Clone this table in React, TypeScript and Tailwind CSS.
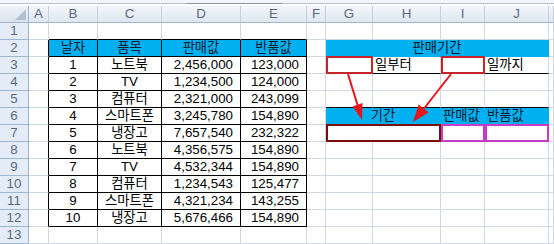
import React from 'react';
import clsx from 'clsx';

// --- grid line colours ---
const gr = 'border-r-[#d0d7e5]';
const gb = 'border-b-[#d0d7e5]';
const kr = 'border-r-black';
const kb = 'border-b-black';
const br = 'border-r-[#00b0f0]';
const bb = 'border-b-[#00b0f0]';

const data: [number, string, string, string][] = [
  [1, '노트북', '2,456,000', '123,000'],
  [2, 'TV', '1,234,500', '124,000'],
  [3, '컴퓨터', '2,321,000', '243,099'],
  [4, '스마트폰', '3,245,780', '154,890'],
  [5, '냉장고', '7,657,540', '232,322'],
  [6, '노트북', '4,356,575', '154,890'],
  [7, 'TV', '4,532,344', '154,890'],
  [8, '컴퓨터', '1,234,543', '125,477'],
  [9, '스마트폰', '4,321,234', '143,255'],
  [10, '냉장고', '5,676,466', '154,890'],
];

const Cell = ({
  children,
  r = gr,
  b = gb,
  className = '',
  box,
}: {
  children?: React.ReactNode;
  r?: string;
  b?: string;
  className?: string;
  box?: string;
}) => (
  <div className={clsx('relative flex items-center whitespace-nowrap border-r border-b', r, b, className)}>
    {children}
    {box && <div className={clsx('absolute left-0 top-[-1px] right-[-1px] bottom-[-1px] border-2 z-10', box)} />}
  </div>
);

const RowHead = ({ n }: { n: number }) => (
  <div className="flex items-center justify-center bg-[#e4ecf7] border-r border-b border-r-[#9eb6ce] border-b-[#9eb6ce] text-[#5a6a82]">
    {n}
  </div>
);

const blue = 'bg-[#00b0f0] text-[#1a1a2e]';

const App = () => {
  const letters = ['A', 'B', 'C', 'D', 'E', 'F', 'G', 'H', 'I', 'J', ''];

  const rightSide = (row: number) => {
    if (row === 2)
      return (
        <Cell r={br} b={bb} className={clsx('col-span-4 justify-center', blue)}>
          판매기간
        </Cell>
      );
    if (row === 3)
      return (
        <>
          <Cell b={kb} box="border-[#c8242c]" />
          <Cell b={kb} className="pl-[2px]">일부터</Cell>
          <Cell b={kb} box="border-[#c8242c]" />
          <Cell b={kb} className="pl-[2px]">일까지</Cell>
        </>
      );
    if (row === 5)
      return (
        <>
          <Cell b={kb} />
          <Cell b={kb} />
          <Cell b={kb} />
          <Cell b={kb} />
        </>
      );
    if (row === 6)
      return (
        <>
          <Cell r={br} b={bb} className={clsx('col-span-2 justify-center', blue)}>
            기간
          </Cell>
          <Cell r={br} b={bb} className={clsx('pl-[2px]', blue)}>판매값</Cell>
          <Cell r={br} b={bb} className={clsx('pl-[2px]', blue)}>반품값</Cell>
        </>
      );
    if (row === 7)
      return (
        <>
          <Cell className="col-span-2" box="border-[#7a0e0e]" />
          <Cell box="border-[#c43cc8]" />
          <Cell box="border-[#c43cc8]" />
        </>
      );
    return (
      <>
        <Cell />
        <Cell />
        <Cell />
        <Cell />
      </>
    );
  };

  const rows = [];
  for (let row = 1; row <= 13; row++) {
    const inTable = row >= 2 && row <= 12;
    const d = row >= 3 && row <= 12 ? data[row - 3] : null;
    rows.push(
      <React.Fragment key={row}>
        <RowHead n={row} />
        <Cell r={inTable ? kr : gr} />
        {row === 2 ? (
          <>
            <Cell r={kr} b={kb} className={clsx('justify-center', blue)}>날자</Cell>
            <Cell r={kr} b={kb} className={clsx('justify-center', blue)}>품목</Cell>
            <Cell r={kr} b={kb} className={clsx('justify-center', blue)}>판매값</Cell>
            <Cell r={kr} b={kb} className={clsx('justify-center', blue)}>반품값</Cell>
          </>
        ) : d ? (
          <>
            <Cell r={kr} b={kb} className="justify-center">{d[0]}</Cell>
            <Cell r={kr} b={kb} className="justify-center">{d[1]}</Cell>
            <Cell r={kr} b={kb} className="justify-end pr-[7px]">{d[2]}</Cell>
            <Cell r={kr} b={kb} className="justify-end pr-[7px]">{d[3]}</Cell>
          </>
        ) : (
          <>
            <Cell b={row === 1 ? kb : gb} />
            <Cell b={row === 1 ? kb : gb} />
            <Cell b={row === 1 ? kb : gb} />
            <Cell b={row === 1 ? kb : gb} />
          </>
        )}
        <Cell />
        {rightSide(row)}
        <Cell />
      </React.Fragment>
    );
  }

  return (
    <div className="relative w-[554px] h-[244px] overflow-hidden bg-white text-[13.3px] leading-none text-black font-[family-name:Liberation_Sans,Noto_Sans_CJK_KR,sans-serif]">
      {/* top strip */}
      <div className="h-[3px] bg-[#f4f6f9]" />
      <div className="flex h-px">
        <div className="w-[187px] bg-[#b9c3cf]" />
        <div className="w-[95px] bg-[#8c96a3]" />
        <div className="flex-1 bg-[#b9c3cf]" />
      </div>
      <div className="h-[2px] bg-white" />

      <div className="grid grid-cols-[29px_20px_49px_64px_79px_66px_19px_47px_68px_44px_64px_1fr] auto-rows-[17px]">
        {/* column headers */}
        <div className="relative bg-linear-to-b from-[#eef3fa] to-[#dae3ee] border-r border-b border-r-[#9eb6ce] border-b-[#9eb6ce]">
          <svg className="absolute right-[2px] bottom-[2px]" width="11" height="11" viewBox="0 0 11 11">
            <polygon points="11,0 11,11 0,11" fill="#b4c0d0" />
          </svg>
        </div>
        {letters.map((l, i) => (
          <div
            key={i}
            className="flex items-center justify-center bg-linear-to-b from-[#f3f6fb] to-[#dee6f0] border-r border-b border-r-[#c3cedb] border-b-[#9eb6ce] text-[#5a6a82]"
          >
            {l}
          </div>
        ))}
        {rows}
      </div>

      {/* arrows */}
      <svg className="absolute left-0 top-0 pointer-events-none z-20" width="554" height="244">
        <line x1="348" y1="74" x2="357.5" y2="105" stroke="#e8141c" strokeWidth="2" />
        <polygon points="352.6,106.4 362.5,103 362,120" fill="#e8141c" />
        <line x1="451" y1="74" x2="424" y2="108.5" stroke="#e8141c" strokeWidth="2" />
        <polygon points="418.6,104.5 428.6,112.6 413,122" fill="#e8141c" />
      </svg>
    </div>
  );
};

export default App;
